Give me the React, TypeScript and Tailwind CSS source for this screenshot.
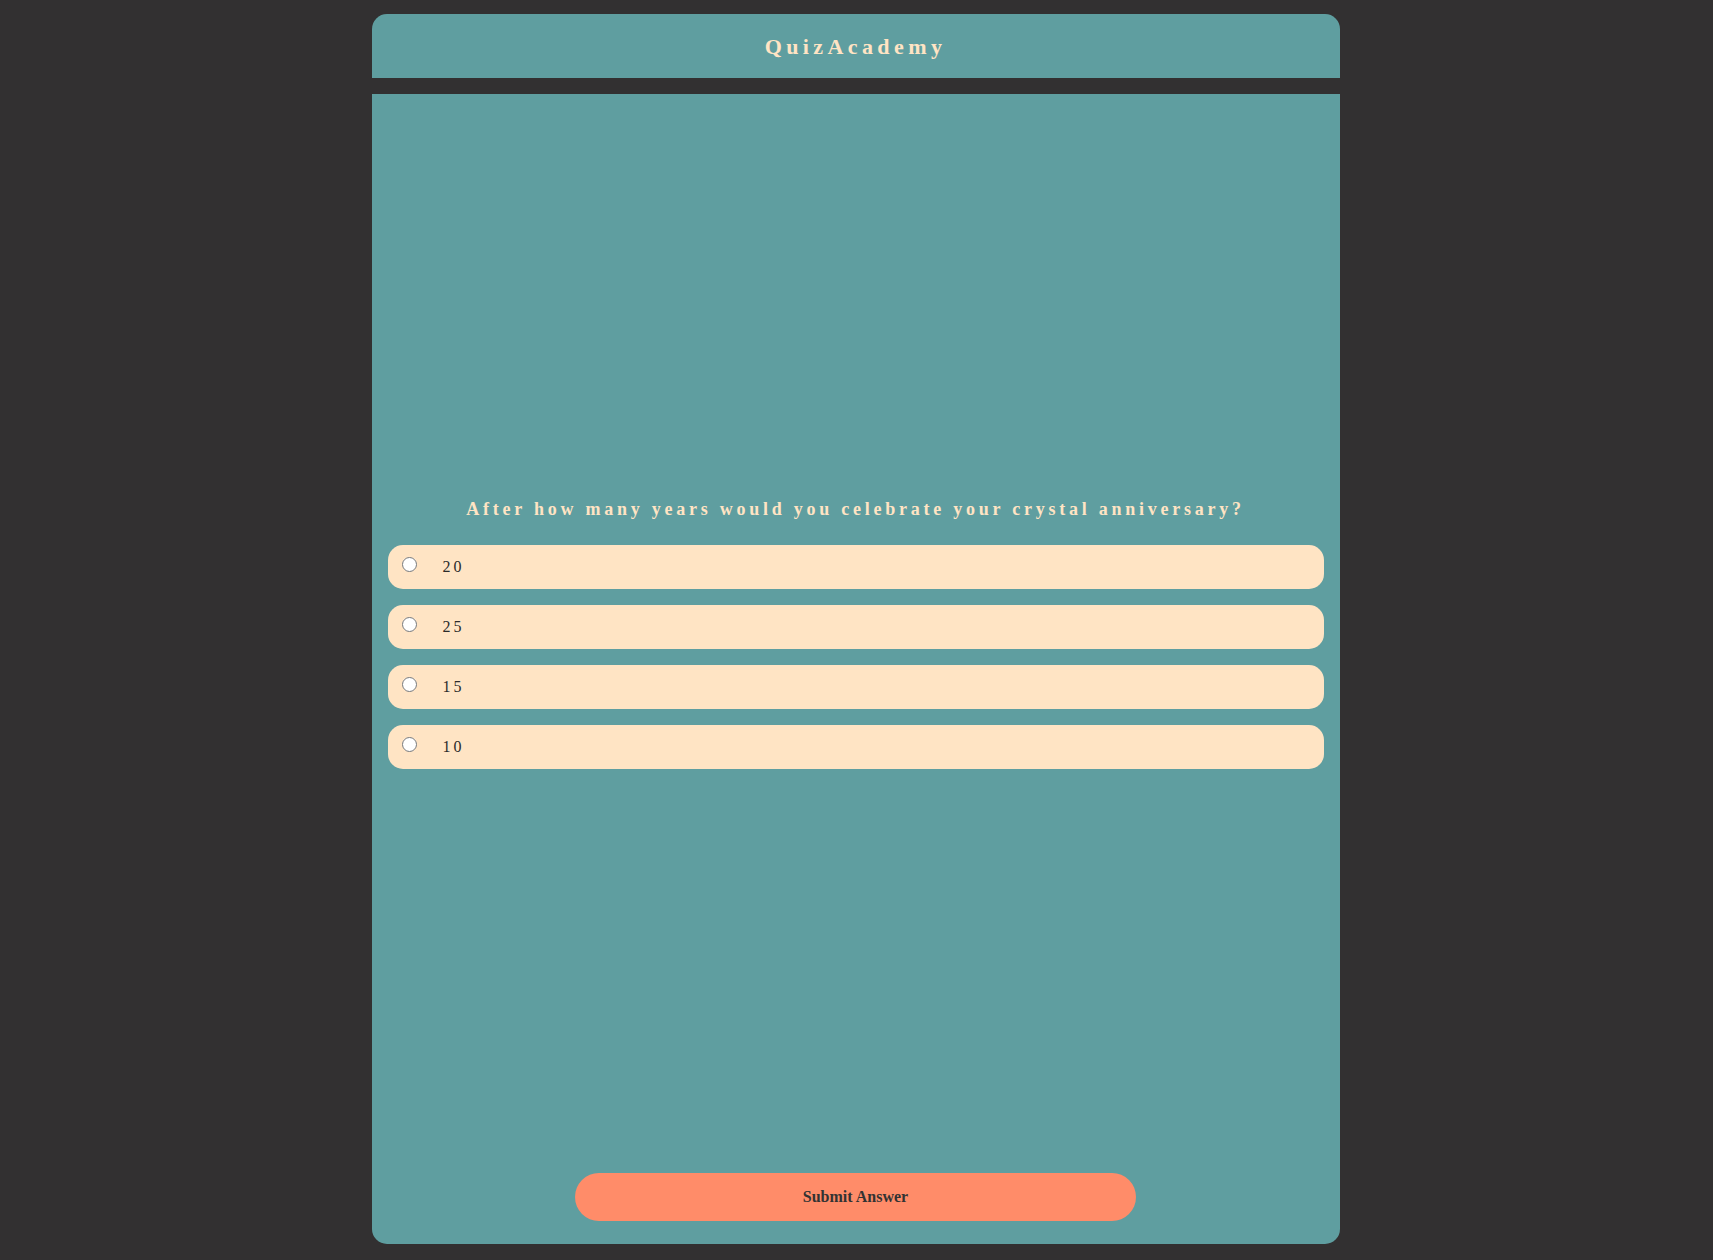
import { useState } from "react";

const OPTIONS = ["20", "25", "15", "10"];

export default function App() {
  const [picked, setPicked] = useState<string | null>(null);

  return (
    <main
      className="min-h-screen bg-[#323031] pt-[14px] pb-4"
      style={{ fontFamily: '"Liberation Serif", "Times New Roman", serif' }}
    >
      <div className="mx-auto flex w-[968px] -translate-x-px flex-col gap-4">
        <header className="flex h-16 items-center justify-center rounded-t-[15px] bg-[#5f9ea0]">
          <h1 className="text-[22px] font-bold tracking-[0.2em] text-[#ffe4c4]">QuizAcademy</h1>
        </header>

        <section className="flex h-[1150px] flex-col rounded-b-[15px] bg-[#5f9ea0] px-4 pb-[23px]">
          <div className="-mt-[2px] flex flex-1 flex-col justify-center">
            <h2 className="mb-6 text-center text-[18px] leading-6 font-bold tracking-[3.75px] text-[#ffe4c4]">
              After how many years would you celebrate your crystal anniversary?
            </h2>
            <div className="flex flex-col gap-4">
              {OPTIONS.map((opt) => (
                <label
                  key={opt}
                  className="flex h-11 cursor-pointer items-center rounded-[15px] bg-[#ffe4c4] pl-[14px]"
                >
                  <input
                    type="radio"
                    name="answer"
                    checked={picked === opt}
                    onChange={() => setPicked(opt)}
                    className="m-0 mb-1 h-[15px] w-[15px]"
                  />
                  <span className="ml-[26px] text-[16px] tracking-[3px] text-[#2b2b2b]">{opt}</span>
                </label>
              ))}
            </div>
          </div>

          <button className="mx-auto h-12 w-[60%] rounded-full bg-[#ff8c69] text-[16px] font-bold text-[#333]">
            Submit Answer
          </button>
        </section>
      </div>
    </main>
  );
}
